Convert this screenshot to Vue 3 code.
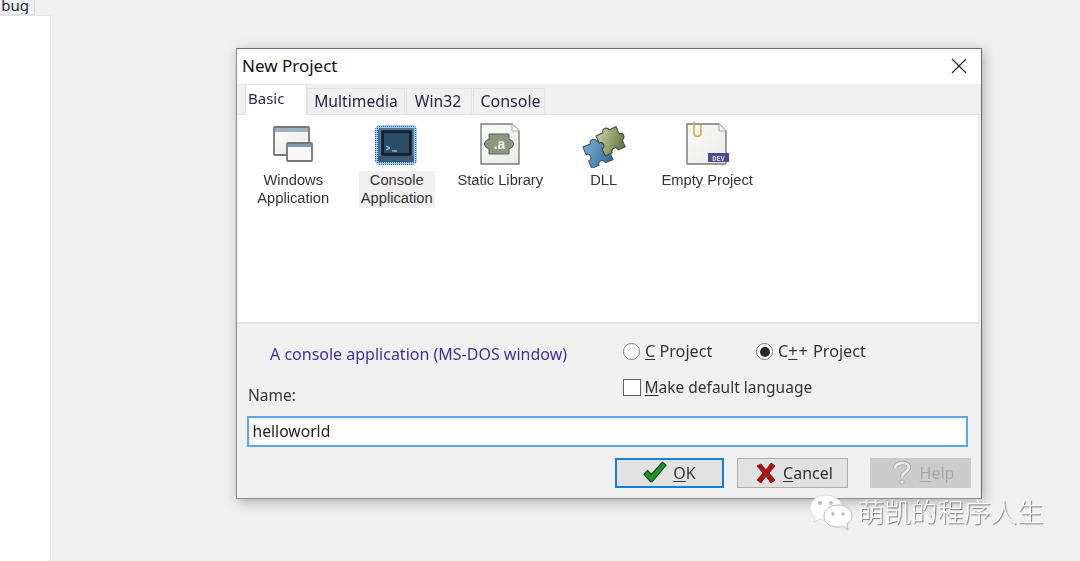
<script setup>
const items = [
  { id: 'win', lines: ['Windows', 'Application'] },
  { id: 'con', lines: ['Console', 'Application'], selected: true },
  { id: 'lib', lines: ['Static Library'] },
  { id: 'dll', lines: ['DLL'] },
  { id: 'emp', lines: ['Empty Project'] },
]
const tabs = ['Multimedia', 'Win32', 'Console']
const piece = 'M0 0H7a3 3 0 1 1 6 0H20V7a3 3 0 1 1 0 6V20H13a3 3 0 1 0-6 0H0V13a3 3 0 1 0 0-6Z'
</script>

<template>
  <div class="page">
    <aside class="side">
      <div class="side-tab">bug</div>
      <div class="side-panel"></div>
    </aside>

    <section class="dialog">
      <header class="title">
        <span>New Project</span>
        <svg class="close" width="16" height="16" viewBox="0 0 16 16"><path d="M1 1L15 15M15 1L1 15" stroke="#222" stroke-width="1.1" fill="none"/></svg>
      </header>

      <nav class="tabs">
        <div class="tab active">Basic</div>
        <div v-for="t in tabs" :key="t" class="tab">{{ t }}</div>
      </nav>

      <div class="panel">
        <div v-for="it in items" :key="it.id" class="item">
          <svg class="ico" width="48" height="48" viewBox="0 0 48 48">
            <defs>
              <linearGradient :id="'g-' + it.id" x1="0" y1="0" x2="1" y2="1">
                <stop offset="0" stop-color="#fbfbfa"/>
                <stop offset="1" stop-color="#e9e9e6"/>
              </linearGradient>
            </defs>
            <template v-if="it.id === 'win'">
              <rect x="6" y="8" width="35" height="28" rx="1" fill="#000" opacity=".12"/>
              <rect x="5" y="7" width="35" height="28" rx="1" fill="url(#g-win)" stroke="#767676" stroke-width="1.8"/>
              <rect x="6" y="8" width="33" height="4" fill="#9db0c2"/>
              <rect x="18" y="23" width="25" height="18" rx="1" fill="#f7f7f7" stroke="#767676" stroke-width="1.8"/>
              <rect x="19" y="24" width="23" height="3" fill="#8299ae"/>
            </template>
            <template v-else-if="it.id === 'con'">
              <defs>
                <pattern id="dots" width="2" height="2" patternUnits="userSpaceOnUse">
                  <rect width="2" height="2" fill="#a9cdea"/>
                  <rect width="1" height="1" fill="#1668ad"/>
                </pattern>
              </defs>
              <rect x="2" y="5" width="42" height="40" rx="5" fill="url(#dots)"/>
              <rect x="5" y="8" width="36" height="34" rx="3" fill="#4f7390"/>
              <rect x="5" y="36" width="36" height="6" rx="2" fill="#3b5a74"/>
              <rect x="9" y="11" width="29" height="24" fill="#13222f" stroke="#101c26" stroke-width="1.500"/>
              <rect x="11" y="13" width="25" height="20" fill="#2b4c66"/>
              <path d="M13 26l4 2-4 2M19 31h5" stroke="#cfe1ed" stroke-width="1" fill="none"/>
            </template>
            <template v-else-if="it.id === 'lib'">
              <path d="M5 4H36L43 11V44H5Z" fill="url(#g-lib)" stroke="#7c7c7c" stroke-width="1.400"/>
              <path d="M36 4V11H43" fill="#fff" stroke="#a0a0a0"/>
              <path d="M13 14H33V19.500a4.500 4.500 0 1 1 0 9V34H13V28.500a4.500 4.500 0 1 1 0-9Z" fill="#8f9583" stroke="#5f6456"/>
              <text x="23.500" y="29" text-anchor="middle" class="lib-a">.a</text>
            </template>
            <template v-else-if="it.id === 'dll'">
              <defs>
                <linearGradient id="olive" x1="0" y1="0" x2="1" y2="1">
                  <stop offset="0" stop-color="#d3d9b4"/>
                  <stop offset=".55" stop-color="#8f9c68"/>
                  <stop offset="1" stop-color="#56603c"/>
                </linearGradient>
                <linearGradient id="blue" x1="0" y1="0" x2="1" y2="1">
                  <stop offset="0" stop-color="#7db1d8"/>
                  <stop offset="1" stop-color="#2f6494"/>
                </linearGradient>
              </defs>
              <path :d="piece" transform="translate(3 27) rotate(-22) scale(1.150)" fill="url(#blue)" stroke="#27465f" stroke-width=".8"/>
              <path :d="piece" transform="translate(16 16) rotate(-25) scale(1.100)" fill="url(#olive)" stroke="#3c4329" stroke-width=".9"/>
            </template>
            <template v-else>
              <path d="M4 4H36L43 11V43a1 1 0 0 1-1 1H5a1 1 0 0 1-1-1Z" fill="url(#g-emp)" stroke="#777" stroke-width="1.400"/>
              <path d="M36 4V11H43" fill="#fff" stroke="#a0a0a0"/>
              <path d="M11 2V13a3.500 3.500 0 0 0 7 0V5" fill="none" stroke="#d9a23f" stroke-width="1.500"/>
              <rect x="25" y="33" width="21" height="9" fill="#4b4a8c"/>
              <text x="35.500" y="40.500" text-anchor="middle" class="dev">DEV</text>
            </template>
          </svg>
          <div class="label" :class="{ selected: it.selected }">
            <div v-for="l in it.lines" :key="l">{{ l }}</div>
          </div>
        </div>
      </div>

      <div class="form">
        <div class="options">
          <div class="left">
            <div class="desc">A console application (MS-DOS window)</div>
            <div class="name-label">Name:</div>
          </div>
          <div class="right">
            <div class="radios">
              <label class="opt c"><span class="radio"></span><span><u>C</u> Project</span></label>
              <label class="opt"><span class="radio on"></span><span>C<u class="plus">+</u><span class="plus">+</span> Project</span></label>
            </div>
            <label class="opt check"><span class="box"></span><span><u>M</u>ake default language</span></label>
          </div>
        </div>

        <div class="input">helloworld</div>

        <div class="buttons">
          <div class="btn ok">
            <svg width="24" height="23" viewBox="0 0 26 24"><path d="M1 14L5 10L9 14L21 1L25 4L10 22H8Z" fill="#1c9a20" stroke="#0f3d1c" stroke-width="1.200"/></svg>
            <span><u>O</u>K</span>
          </div>
          <div class="btn cancel">
            <svg width="20" height="20" viewBox="0 0 20 20"><path d="M1 3L5 1L10 7L15 0L19 3L13 10L19 17L15 20L10 13L5 20L1 17L7 10Z" fill="#a81414" stroke="#6d0a0a" stroke-width=".8"/></svg>
            <span><u>C</u>ancel</span>
          </div>
          <div class="btn help">
            <svg width="18" height="24" viewBox="0 0 18 24"><path d="M2 7C3 1 15 0 16 6C16 11 9 11 9 16" fill="none" stroke="#a8a8a8" stroke-width="4.500"/><path d="M2 7C3 1 15 0 16 6C16 11 9 11 9 16" fill="none" stroke="#ececec" stroke-width="2.500"/><circle cx="9" cy="21" r="2.200" fill="#e8e8e8" stroke="#a8a8a8"/></svg>
            <span><u>H</u>elp</span>
          </div>
        </div>
      </div>
    </section>

    <div class="mark">
      <svg width="44" height="38" viewBox="0 0 44 38">
        <path d="M17 1C8 1 1 7 1 14C1 18 3 21 6 23L5 28L11 25C13 26 15 26 17 26C26 26 33 20 33 14C33 7 26 1 17 1Z" fill="#fff" stroke="#d8d8d8"/>
        <path d="M29 11C21 11 15 16 15 22C15 29 21 33 29 33C31 33 32 33 34 32L39 36L38 30C41 28 43 25 43 22C43 16 37 11 29 11Z" fill="#fff" stroke="#b8b8b8"/>
        <circle cx="11" cy="9" r="2" fill="#bbb"/><circle cx="22" cy="9" r="2" fill="#bbb"/>
        <circle cx="24" cy="20" r="1.700" fill="#bbb"/><circle cx="34" cy="20" r="1.700" fill="#bbb"/>
      </svg>
      <span class="mark-text">萌凯的程序人生</span>
    </div>
  </div>
</template>

<style>
html, body { margin: 0; background: #f0f0f0; }
</style>

<style scoped>
.page {
  position: relative;
  width: 1080px;
  height: 561px;
  overflow: hidden;
  background: #f0f0f0;
  font-family: "Noto Sans", "Open Sans", sans-serif;
  color: #222;
}
.side { width: 51px; height: 561px; display: flex; flex-direction: column; }
.side-tab {
  width: 29px;
  height: 14px;
  border-right: 1px solid #dcdcdc;
  border-bottom: 1px solid #dcdcdc;
  font-size: 15px;
  line-height: 11px;
  color: #2a2a3a;
  text-align: right;
  padding-right: 5px;
  overflow: hidden;
}
.side-panel { flex: 1; background: #fff; border-right: 1px solid #e2e2e2; border-top: 1px solid #e6e6e6; }

.dialog {
  position: absolute;
  left: 236px;
  top: 48px;
  width: 744px;
  height: 449px;
  border: 1px solid #6e6e6e;
  border-left-color: #8a8a8a;
  border-bottom-color: #8c8c8c;
  background: #f0f0f0;
  box-shadow: 2px 3px 12px rgba(0, 0, 0, .28);
  display: flex;
  flex-direction: column;
  filter: blur(.35px);
}
.title {
  height: 35px;
  flex: none;
  background: #fff;
  display: flex;
  align-items: center;
  justify-content: space-between;
  padding: 0 14px 2px 5px;
  box-sizing: border-box;
  font-size: 17px;
  color: #111;
}

.tabs {
  height: 31px;
  flex: none;
  display: flex;
  align-items: flex-end;
  padding-left: 8px;
  border-bottom: 1px solid #e2e2e2;
  box-sizing: border-box;
}
.tab {
  height: 26px;
  margin-right: 1px;
  font-size: 15.700px;
  line-height: 25px;
  text-align: center;
  color: #2c2440;
  background: #f0f0f0;
  border: 1px solid #e4e4e4;
  border-bottom: none;
  box-sizing: border-box;
}
.tab:nth-child(2) { width: 98px; }
.tab:nth-child(3) { width: 66px; padding-right: 2px; }
.tab:nth-child(4) { width: 72px; padding-left: 3px; font-size: 16px; }
.tab.active {
  height: 31px;
  width: 62px;
  margin-right: 0;
  margin-bottom: -1px;
  padding: 0 0 5px 2px;
  line-height: 26px;
  text-align: left;
  background: #fff;
  color: #2c2a50;
  font-size: 15px;
  border-color: #e0e0e0;
}

.panel {
  height: 207px;
  flex: none;
  margin: 0 2px 0 0;
  background: #fff;
  border-bottom: 2px solid #e3e3e3;
  border-right: 1px solid #e6e6e6;
  display: flex;
  align-items: flex-start;
  padding-left: 4.500px;
  box-sizing: content-box;
}
.item {
  width: 103.500px;
  padding-top: 5px;
  display: flex;
  flex-direction: column;
  align-items: center;
  font-family: "Liberation Sans", Arial, sans-serif;
  font-size: 14.700px;
  line-height: 18px;
  color: #333;
  text-align: center;
}
.ico { display: block; }
.label { margin-top: 3px; }
.label.selected { background: #f0f0f0; padding: 0 2px 1px; }

.form { flex: 1; display: flex; flex-direction: column; }
.options { display: flex; height: 92px; }
.left { width: 386px; flex: none; padding-top: 19px; box-sizing: border-box; }
.desc { margin-left: 33px; font-size: 16px; line-height: 22px; color: #3c3394; }
.name-label { margin: 19px 0 0 11px; font-size: 15.500px; line-height: 22px; color: #333; }
.right { padding-top: 17px; }
.radios { display: flex; height: 21px; }
.opt { display: flex; align-items: center; gap: 5px; font-size: 16.200px; color: #333; line-height: 21px; }
.opt.c { width: 133px; }
.plus { margin-right: 1px; }
.radio { width: 15px; height: 15px; border: 1.500px solid #777; border-radius: 50%; background: #fff; position: relative; }
.radio.on::after { content: ""; position: absolute; inset: 2.500px; border-radius: 50%; background: #2a2a2a; }
.check { margin-top: 15px; height: 21px; font-size: 15.500px; gap: 4px; }
.box { width: 15.500px; height: 15.500px; border: 1.200px solid #5f5f5f; background: #fff; }
u { text-underline-offset: 2px; }

.input {
  margin: 0 0 0 10px;
  width: 713px;
  height: 27px;
  flex: none;
  border: 2px solid #55a8ea;
  background: #fff;
  padding-left: 3.500px;
  font-size: 15.700px;
  line-height: 26px;
  color: #222;
}
.buttons { display: flex; margin-top: 10.500px; padding-right: 10px; justify-content: flex-end; }
.btn {
  height: 30px;
  box-sizing: border-box;
  display: flex;
  align-items: center;
  justify-content: center;
  gap: 7px;
  font-size: 16px;
  background: #e1e1e1;
  border: 1px solid #adadad;
  color: #333;
}
.ok { width: 109px; border: 2px solid #0f7fd8; gap: 6px; }
.cancel { width: 111px; margin-left: 13px; padding-left: 4px; }
.help { width: 101px; margin-left: 22px; padding-left: 6px; gap: 9px; background: #cccccc; border-color: #cccccc; color: #a6a6a6; }

.mark {
  position: absolute;
  left: 809px;
  top: 494px;
  display: flex;
  align-items: center;
  gap: 5px;
  font-family: "Noto Sans CJK SC", sans-serif;
  font-weight: 300;
  font-size: 26.500px;
  color: #fff;
  text-shadow: 1px 1px 1px #777;
}
.mark-text { margin-top: -5px; }
.lib-a { font: 700 14px "Liberation Sans", sans-serif; fill: #eeeee6; }
.dev { font: 700 7px "Liberation Mono", monospace; fill: #ddd; }
</style>
